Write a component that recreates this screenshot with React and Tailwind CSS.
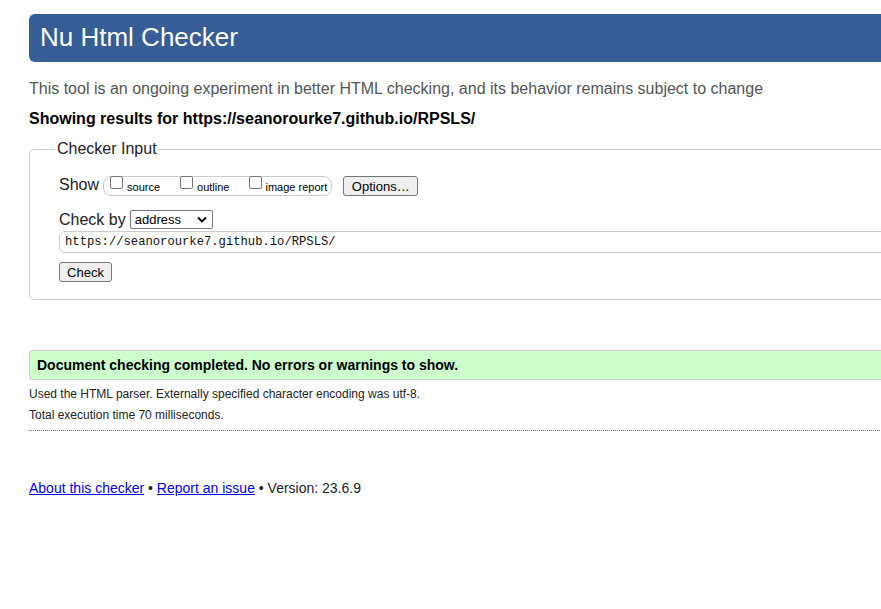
import React from "react";

function Checkbox() {
  return (
    <span className="inline-block w-[13px] h-[13px] border border-[#767676] rounded-[2px] bg-white shrink-0" />
  );
}

function Btn({ children, className = "" }) {
  return (
    <span
      className={
        "inline-flex items-center justify-center h-[20px] border border-[#767676] bg-[#efefef] rounded-[3px] text-[13px] text-black leading-none " +
        className
      }
    >
      {children}
    </span>
  );
}

export default function App() {
  return (
    <div
      className="w-[881px] h-[609px] overflow-hidden bg-white"
      style={{ fontFamily: '"Liberation Sans", Arial, sans-serif' }}
    >
      <div className="w-[1000px] pl-[29px] pt-[14px]">
        <div className="h-[48px] bg-[#365d95] rounded-l-[6px] flex items-center pl-[11px] pb-[2px]">
          <h1 className="text-[26px] text-white leading-none">Nu Html Checker</h1>
        </div>

        <p className="mt-[17px] text-[16px] leading-[20px] text-[#555]">
          This tool is an ongoing experiment in better HTML checking, and its behavior remains subject to change
        </p>

        <p className="mt-[10px] text-[16px] leading-[20px] font-bold text-black">
          Showing results for https://seanorourke7.github.io/RPSLS/
        </p>

        <fieldset className="mt-[10px] border border-[#ccc] rounded-[5px] pl-[29px] pb-[17px]">
          <legend className="ml-[-4px] px-[2px] text-[16px] leading-[20px] text-[#222]">Checker Input</legend>

          <div className="mt-[17px] flex items-center h-[20px]">
            <span className="text-[16px] leading-[20px] text-[#222] mt-[-2px]">Show</span>
            <div className="ml-[4px] h-[20px] border border-[#ccc] rounded-[8px] flex items-center pl-[6px] pr-[4px] text-[11px] text-black">
              <span className="flex items-center">
                <span className="mt-[-3px]"><Checkbox /></span>
                <span className="ml-[4px] mt-[2px]">source</span>
              </span>
              <span className="flex items-center ml-[20px]">
                <span className="mt-[-3px]"><Checkbox /></span>
                <span className="ml-[4px] mt-[2px]">outline</span>
              </span>
              <span className="flex items-center ml-[20px]">
                <span className="mt-[-3px]"><Checkbox /></span>
                <span className="ml-[3px] mt-[2px]">image report</span>
              </span>
            </div>
            <Btn className="ml-[11px] w-[75px]">Options…</Btn>
          </div>

          <div className="mt-[14px] flex items-center h-[19px]">
            <span className="text-[16px] leading-[20px] text-[#222]">Check by</span>
            <span className="ml-[4px] w-[83px] h-[19px] border border-[#767676] rounded-[2px] flex items-center justify-between pl-[4px] pr-[5px] text-[13px] text-black bg-white">
              <span>address</span>
              <svg width="10" height="7" viewBox="0 0 10 7">
                <path d="M1 1.5 L5 5.5 L9 1.5" fill="none" stroke="#000" strokeWidth="1.8" />
              </svg>
            </span>
          </div>

          <div className="mt-[2px] h-[22px] border border-[#ccc] rounded-l-[6px] flex items-center pl-[5px]">
            <span
              className="text-[12.2px] text-[#111] leading-none"
              style={{ fontFamily: '"Liberation Mono", "DejaVu Sans Mono", monospace' }}
            >
              https://seanorourke7.github.io/RPSLS/
            </span>
          </div>

          <div className="mt-[9px] flex">
            <Btn className="w-[53px]">Check</Btn>
          </div>
        </fieldset>

        <div className="mt-[50px] h-[30px] bg-[#ccffcc] border-y border-l border-[#ccc] rounded-l-[4px] flex items-center pl-[7px]">
          <span className="text-[14px] font-bold text-black">
            Document checking completed. No errors or warnings to show.
          </span>
        </div>

        <div className="border-b border-dotted border-[#666] pb-[7px]">
          <p className="mt-[6px] text-[12px] leading-[16px] text-[#222]">
            Used the HTML parser. Externally specified character encoding was utf-8.
          </p>
          <p className="mt-[5px] text-[12px] leading-[16px] text-[#222]">
            Total execution time 70 milliseconds.
          </p>
        </div>

        <p className="mt-[48px] text-[14px] leading-[18px] text-[#222]">
          <a href="#" className="text-[#0000ee] underline">About this checker</a>
          {" • "}
          <a href="#" className="text-[#0000ee] underline">Report an issue</a>
          {" • Version: 23.6.9"}
        </p>
      </div>
    </div>
  );
}
